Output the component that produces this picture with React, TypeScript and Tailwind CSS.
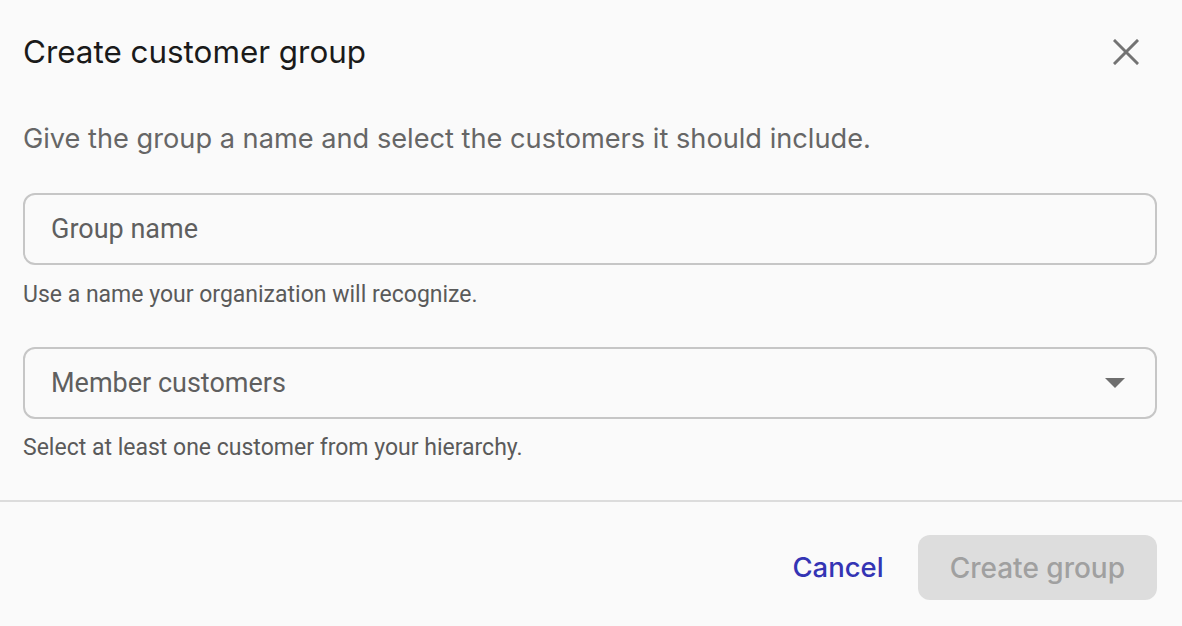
const inter = "font-['Inter','Noto_Sans',sans-serif]";
const roboto = "font-['Roboto','Liberation_Sans',sans-serif]";

function Field({ label, select = false }: { label: string; select?: boolean }) {
  return (
    <div className="flex h-[72px] items-center justify-between rounded-[12px] border-2 border-[#c6c6c6] bg-[#fafafa] pl-[26px] pr-[30px]">
      <span className={`${roboto} text-[27px] leading-[34px] text-[#5f5f5f]`}>{label}</span>
      {select && (
        <svg width="20" height="10" viewBox="0 0 20 10" className="fill-[#6e6e6e]">
          <path d="M0 0h20L10 10z" />
        </svg>
      )}
    </div>
  );
}

export default function App() {
  return (
    <div className="flex h-[626px] w-full flex-col bg-[#fafafa]">
      <div className="px-[23px] pr-[25px]">
        <div className="flex items-center justify-between pt-[33px]">
          <h1 className={`${inter} text-[31.4px] leading-[38px] font-normal text-[#1a1a1a]`}>
            Create customer group
          </h1>
          <button className="mr-[18px] text-[#737373]">
            <svg width="26" height="26" viewBox="0 0 26 26" stroke="currentColor" strokeWidth="3" strokeLinecap="square">
              <path d="M2 2l22 22M24 2L2 24" />
            </svg>
          </button>
        </div>
        <p className={`${inter} mt-[51px] text-[27.2px] leading-[34px] text-[#666666]`}>
          Give the group a name and select the customers it should include.
        </p>
        <div className="mt-[37px]">
          <Field label="Group name" />
        </div>
        <p className={`${roboto} mt-[15px] text-[23px] leading-[30px] text-[#5a5a5a]`}>
          Use a name your organization will recognize.
        </p>
        <div className="mt-[37px]">
          <Field label="Member customers" select />
        </div>
        <p className={`${roboto} mt-[14px] text-[23px] leading-[30px] text-[#5a5a5a]`}>
          Select at least one customer from your hierarchy.
        </p>
      </div>
      <div className="mt-[37px] h-[2px] bg-[#dcdcdc]" />
      <div className="flex items-center justify-end gap-[34px] pr-[25px] pt-[33px]">
        <button className={`${inter} text-[27.5px] font-medium text-[#3434b4]`}>Cancel</button>
        <button
          disabled
          className={`${inter} h-[65px] rounded-[12px] bg-[#dddddd] px-[32px] text-[28px] font-medium text-[#a0a0a0]`}
        >
          Create group
        </button>
      </div>
    </div>
  );
}
